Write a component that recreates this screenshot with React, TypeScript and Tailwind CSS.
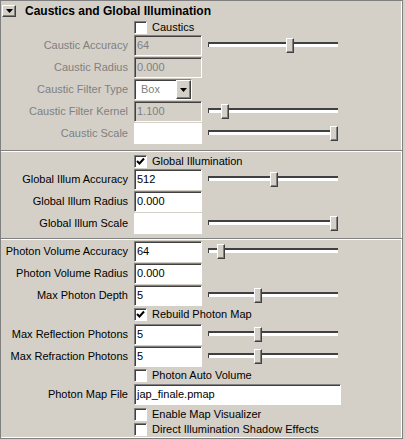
import React from 'react';

const bevelIn = 'border border-t-[#808080] border-l-[#808080] border-r-white border-b-white shadow-[inset_1px_1px_0_#404040]';
const bevelOut = 'border border-t-white border-l-white border-r-[#404040] border-b-[#404040] shadow-[inset_-1px_-1px_0_#808080]';

function DownArrow() {
  return (
    <svg width="7" height="4" viewBox="0 0 7 4" className="block">
      <polygon points="0,0 7,0 3.5,4" fill="#000" />
    </svg>
  );
}

function Row({ label, disabled, children, className = '' }: { label: string; disabled?: boolean; children: React.ReactNode; className?: string }) {
  return (
    <div className={`flex h-[22px] ${className}`}>
      <div className={`w-[127px] shrink-0 text-right leading-[21px] whitespace-nowrap ${disabled ? 'text-[#808080]' : 'text-black'}`}>
        {label}
      </div>
      <div className="ml-[6px] flex gap-[6px]">{children}</div>
    </div>
  );
}

function Field({ value, disabled, width = 'w-[68px]' }: { value: string; disabled?: boolean; width?: string }) {
  return (
    <div className={`${width} h-[21px] ${bevelIn} ${disabled ? 'bg-[#d4d0c8] text-[#808080]' : 'bg-white text-black'} pl-[2px] leading-[19px] whitespace-nowrap overflow-hidden`}>
      {value}
    </div>
  );
}

function Swatch() {
  return <div className="w-[68px] h-[21px] bg-white" />;
}

function Slider({ pos }: { pos: number }) {
  return (
    <div className="relative w-[130px] h-[21px]">
      <div className="absolute left-0 right-0 top-[7px] h-[5px] border-t-2 border-l border-t-[#404040] border-l-[#404040] bg-white" />
      <div
        className={`absolute top-[3px] w-[8px] h-[15px] bg-[#d4d0c8] ${bevelOut}`}
        style={{ left: pos }}
      />
    </div>
  );
}

function Check({ label, checked, className = '' }: { label: string; checked?: boolean; className?: string }) {
  return (
    <div className={`flex items-center h-[15px] pl-[133px] ${className}`}>
      <div className={`w-[13px] h-[13px] bg-white ${bevelIn} flex items-center justify-center`}>
        {checked && (
          <svg width="9" height="9" viewBox="0 0 9 9" className="block">
            <polyline points="1,4 3.5,6.5 8,1.5" fill="none" stroke="#000" strokeWidth="2" />
          </svg>
        )}
      </div>
      <span className="ml-[5px] whitespace-nowrap">{label}</span>
    </div>
  );
}

function Dropdown({ value }: { value: string }) {
  return (
    <div className={`w-[58px] h-[21px] bg-white ${bevelIn} flex`}>
      <span className="flex-1 pl-[6px] leading-[19px] text-[#808080]">{value}</span>
      <div className={`w-[15px] h-[19px] bg-[#d4d0c8] ${bevelOut} flex items-center justify-center`}>
        <DownArrow />
      </div>
    </div>
  );
}

export default function App() {
  return (
    <div className="w-[405px] h-[440px] bg-[#d4d0c8] text-[11px] text-black" style={{ fontFamily: '"Liberation Sans", Arial, sans-serif' }}>
      <div className="w-[403px] border border-[#808080] shadow-[inset_-1px_-1px_0_white]">
        <div className="h-[19px] flex items-center">
          <div className={`ml-[1px] w-[14px] h-[12px] bg-[#d4d0c8] ${bevelOut} flex items-center justify-center`}>
            <DownArrow />
          </div>
          <span className="ml-[9px] font-bold text-[12px] whitespace-nowrap">Caustics and Global Illumination</span>
        </div>

        <div className="pb-[5px]">
          <Check label="Caustics" />
          <Row label="Caustic Accuracy" disabled>
            <Field value="64" disabled />
            <Slider pos={78} />
          </Row>
          <Row label="Caustic Radius" disabled>
            <Field value="0.000" disabled />
          </Row>
          <Row label="Caustic Filter Type" disabled>
            <Dropdown value="Box" />
          </Row>
          <Row label="Caustic Filter Kernel" disabled>
            <Field value="1.100" disabled />
            <Slider pos={13} />
          </Row>
          <Row label="Caustic Scale" disabled>
            <Swatch />
            <Slider pos={122} />
          </Row>
        </div>

        <div className="border-t border-t-[#808080] shadow-[inset_0_1px_0_white] pt-[2px] pb-[3px]">
          <Check label="Global Illumination" checked className="h-[16px]" />
          <Row label="Global Illum Accuracy">
            <Field value="512" />
            <Slider pos={62} />
          </Row>
          <Row label="Global Illum Radius">
            <Field value="0.000" />
          </Row>
          <Row label="Global Illum Scale">
            <Swatch />
            <Slider pos={122} />
          </Row>
        </div>

        <div className="border-t border-t-[#808080] shadow-[inset_0_1px_0_white] pt-[2px] pb-[1px]">
          <Row label="Photon Volume Accuracy">
            <Field value="64" />
            <Slider pos={9} />
          </Row>
          <Row label="Photon Volume Radius">
            <Field value="0.000" />
          </Row>
          <Row label="Max Photon Depth">
            <Field value="5" />
            <Slider pos={46} />
          </Row>
          <Check label="Rebuild Photon Map" checked />
          <Row label="Max Reflection Photons" className="mt-[2px]">
            <Field value="5" />
            <Slider pos={46} />
          </Row>
          <Row label="Max Refraction Photons">
            <Field value="5" />
            <Slider pos={46} />
          </Row>
          <Check label="Photon Auto Volume" />
          <Row label="Photon Map File" className="mt-[1px]">
            <Field value="jap_finale.pmap" width="w-[207px]" />
          </Row>
          <Check label="Enable Map Visualizer" className="mt-[1px]" />
          <Check label="Direct Illumination Shadow Effects" />
        </div>
      </div>
    </div>
  );
}
